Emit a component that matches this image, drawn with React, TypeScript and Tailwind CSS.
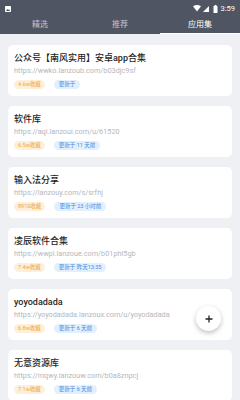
import React from "react";

const items = [
  { title: "公众号【南风实用】安卓app合集", url: "https://wwko.lanzoub.com/b03djc9sf", fav: "4.6w收藏", upd: "更新于" },
  { title: "软件库", url: "https://aqi.lanzoui.com/u/61520", fav: "6.5w收藏", upd: "更新于 11 天前" },
  { title: "输入法分享", url: "https://lanzouy.com/s/srfhj", fav: "8910收藏", upd: "更新于 23 小时前" },
  { title: "凌辰软件合集", url: "https://wwpl.lanzoue.com/b01phl5gb", fav: "7.4w收藏", upd: "更新于 昨天13:35" },
  { title: "yoyodadada", url: "https://yoyodadada.lanzoux.com/u/yoyodadada", fav: "6.8w收藏", upd: "更新于 6 天前" },
  { title: "无意资源库", url: "https://mqwy.lanzouw.com/b0a8znpcj", fav: "7.1w收藏", upd: "更新于 6 天前" },
];

const font = { fontFamily: '"Roboto","Noto Sans CJK SC",sans-serif' };

function StatusBar() {
  return (
    <div className="h-[17px] flex items-center justify-between px-[5px] text-white">
      <svg width="6" height="6" viewBox="0 0 6 6">
        <rect x="0" y="0" width="6" height="6" rx="0.8" fill="#fff" />
        <path d="M1 5 L2.5 3 L3.5 4 L4.2 3.2 L5 5 Z" fill="#4f5563" />
      </svg>
      <div className="flex items-center gap-[2px]">
        <svg width="8" height="7" viewBox="0 0 8 7">
          <path d="M0 1.2 Q4 -1.2 8 1.2 L4 6.5 Z" fill="#fff" />
        </svg>
        <svg width="6" height="6" viewBox="0 0 6 6">
          <path d="M6 0 L6 6 L0 6 Z" fill="#fff" />
        </svg>
        <svg width="5" height="8" viewBox="0 0 5 8" className="ml-[2px]">
          <rect x="1.5" y="0" width="2" height="1" fill="#fff" />
          <rect x="0.5" y="1" width="4" height="7" rx="0.5" fill="#fff" />
        </svg>
        <span className="text-[7.5px] leading-none ml-[1px]">3:59</span>
      </div>
    </div>
  );
}

function Tabs() {
  const tabs = ["精选", "推荐", "应用集"];
  return (
    <div className="flex h-[17px]">
      {tabs.map((t, i) => (
        <div key={t} className="flex-1 flex flex-col">
          <div
            className={
              "flex-1 flex items-center justify-center text-[8px] " +
              (i === 2 ? "text-white" : "text-[#c3c7ce]")
            }
          >
            {t}
          </div>
          <div className={i === 2 ? "h-[1.5px] bg-white" : "h-[1.5px]"} />
        </div>
      ))}
    </div>
  );
}

function Card({ title, url, fav, upd }: (typeof items)[number]) {
  return (
    <div className="h-[51px] shrink-0 rounded-[5px] bg-white px-[6px] pt-[7px]">
      <div className="text-[9px] leading-[12px] font-medium text-[#1f1f1f] whitespace-nowrap">{title}</div>
      <div className="mt-[2px] text-[7.3px] leading-[10px] text-[#b3b7bd] whitespace-nowrap">{url}</div>
      <div className="mt-[4px] flex gap-[9px]">
        <span className="h-[9px] rounded-full bg-[#fdf0db] px-[4px] text-[5.5px] leading-[9px] text-[#eea53a]">{fav}</span>
        <span className="h-[9px] rounded-full bg-[#e2effc] px-[5px] text-[5.5px] leading-[9px] text-[#3d8ce6]">{upd}</span>
      </div>
    </div>
  );
}

export default function App() {
  return (
    <div className="relative w-[240px] h-[400px] overflow-hidden bg-[#eef0f4]" style={font}>
      <div className="bg-[#4f5563]">
        <StatusBar />
        <Tabs />
      </div>
      <div className="flex flex-col gap-[10px] px-[8px] pt-[11px]">
        {items.map((it) => (
          <Card key={it.title} {...it} />
        ))}
      </div>
      <div className="absolute left-[196px] top-[306px] w-[25px] h-[25px] rounded-full bg-white shadow-[0_2px_5px_rgba(0,0,0,0.25)] flex items-center justify-center">
        <svg width="8" height="8" viewBox="0 0 8 8">
          <path d="M4 0.5 V7.5 M0.5 4 H7.5" stroke="#222" strokeWidth="1.3" />
        </svg>
      </div>
    </div>
  );
}
